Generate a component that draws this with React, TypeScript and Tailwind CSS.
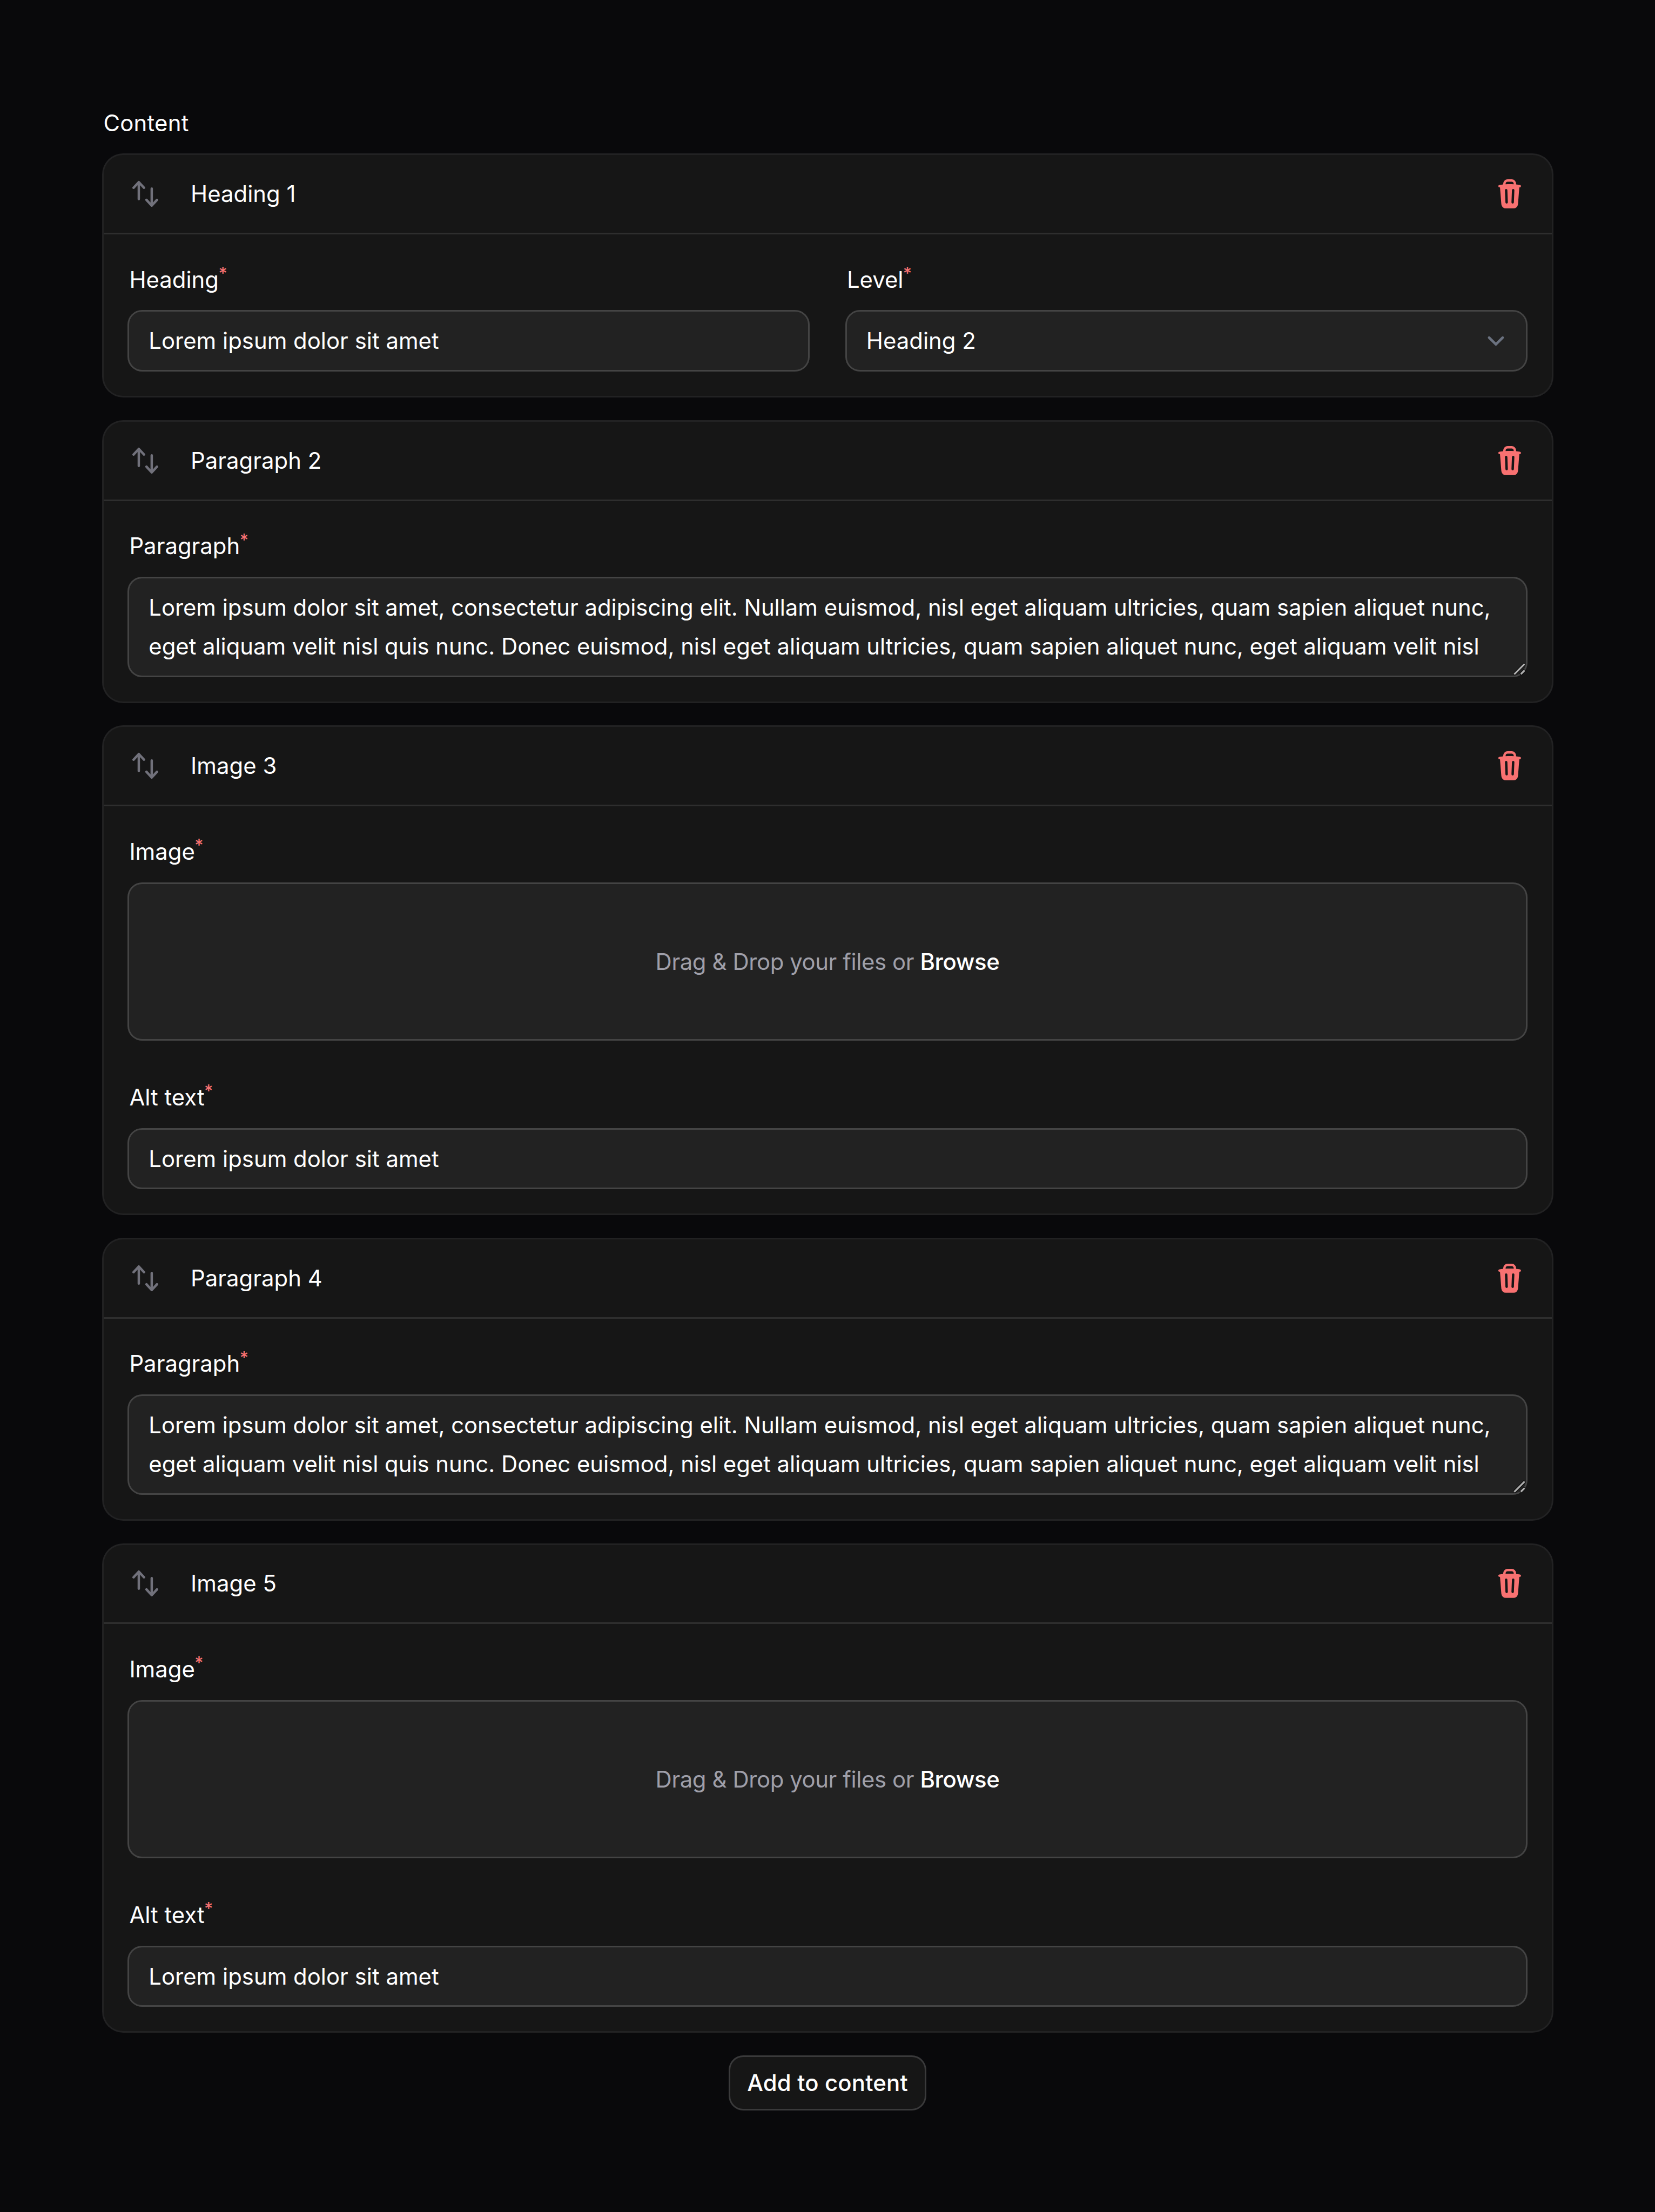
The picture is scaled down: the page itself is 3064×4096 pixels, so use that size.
import type { ReactNode } from "react";
import { HiMiniArrowsUpDown, HiMiniTrash } from "react-icons/hi2";

const LOREM =
  "Lorem ipsum dolor sit amet, consectetur adipiscing elit. Nullam euismod, nisl eget aliquam ultricies, quam sapien aliquet nunc, eget aliquam velit nisl quis nunc. Donec euismod, nisl eget aliquam ultricies, quam sapien aliquet nunc, eget aliquam velit nisl";

function Field({ label, children }: { label: string; children: ReactNode }) {
  return (
    <div className="grid min-w-0 gap-2">
      <div className="h-6 text-sm leading-6">
        {label}
        <sup className="-ml-[0.2px] font-medium text-[#f87171]">*</sup>
      </div>
      {children}
    </div>
  );
}

function TextInput({ value }: { value: string }) {
  return (
    <div className="h-9 rounded-lg bg-[#222222] px-3 text-sm leading-9 shadow-[0_0_0_1px_#444444]">
      {value}
    </div>
  );
}

function SelectInput({ value }: { value: string }) {
  return (
    <div className="flex h-9 items-center justify-between rounded-lg bg-[#222222] pl-3 pr-2 text-sm shadow-[0_0_0_1px_#444444]">
      <span>{value}</span>
      <svg className="size-[21px]" viewBox="0 0 20 20" fill="none">
        <path d="M6 8l4 4 4-4" stroke="#6b7280" strokeWidth="1.5" strokeLinecap="round" strokeLinejoin="round" />
      </svg>
    </div>
  );
}

function TextArea({ value }: { value: string }) {
  return (
    <div className="relative h-[60px] rounded-lg bg-[#222222] px-3 py-1.5 text-sm leading-6 shadow-[0_0_0_1px_#444444]">
      <div className="h-12 overflow-hidden tracking-[-0.016px]">{value}</div>
      <svg className="absolute bottom-0 right-0 size-2" viewBox="0 0 8 8" fill="none">
        <path d="M.6 7.4 7.4 .6M4.6 7.4 7.4 4.6" stroke="#0c0c0c" strokeWidth="1.9" />
        <path d="M.8 7.2 7.2 .8M4.9 7.1 7.2 4.8" stroke="#b0b0b0" strokeWidth="1.1" />
      </svg>
    </div>
  );
}

function DropZone() {
  return (
    <div className="flex h-24 items-center justify-center rounded-lg bg-[#222222] text-sm tracking-[-0.135px] text-zinc-400 shadow-[0_0_0_1px_#444444]">
      <span className="pt-[0.4px]">
        Drag &amp; Drop your files or <span className="font-medium text-white">Browse</span>
      </span>
    </div>
  );
}

function Block({ title, children }: { title: string; children: ReactNode }) {
  return (
    <section className="rounded-xl bg-[#161616] shadow-[0_0_0_1px_#222223]">
      <header className="flex h-12 items-center px-4">
        <HiMiniArrowsUpDown className="size-5 text-zinc-500" />
        <h2 className="ml-[18px] flex-1 text-sm leading-6">{title}</h2>
        <HiMiniTrash className="size-5 text-[#f87171]" />
      </header>
      <div className="h-px bg-[#2e2e2e]" />
      <div className="grid gap-6 p-4">{children}</div>
    </section>
  );
}

function ImageBlock({ title }: { title: string }) {
  return (
    <Block title={title}>
      <Field label="Image">
        <DropZone />
      </Field>
      <Field label="Alt text">
        <TextInput value="Lorem ipsum dolor sit amet" />
      </Field>
    </Block>
  );
}

function ParagraphBlock({ title }: { title: string }) {
  return (
    <Block title={title}>
      <Field label="Paragraph">
        <TextArea value={LOREM} />
      </Field>
    </Block>
  );
}

export default function App() {
  return (
    <div className="h-[4096px] w-[3064px] overflow-hidden bg-[#09090b]">
      <main className="w-[1024px] p-16 font-['Inter',sans-serif] text-white antialiased [zoom:2.9922]">
        <div className="text-sm leading-6 tracking-[0.07px]">Content</div>
        <div className="mt-2 grid gap-4">
          <Block title="Heading 1">
            <div className="grid grid-cols-2 gap-6">
              <Field label="Heading">
                <TextInput value="Lorem ipsum dolor sit amet" />
              </Field>
              <Field label="Level">
                <SelectInput value="Heading 2" />
              </Field>
            </div>
          </Block>
          <ParagraphBlock title="Paragraph 2" />
          <ImageBlock title="Image 3" />
          <ParagraphBlock title="Paragraph 4" />
          <ImageBlock title="Image 5" />
        </div>
        <div className="mt-4 flex justify-center">
          <button className="h-8 w-[120px] whitespace-nowrap rounded-lg bg-[#161616] text-center text-sm font-medium tracking-[0.06px] shadow-[0_0_0_1px_#3a3a3b]">
            Add to content
          </button>
        </div>
      </main>
    </div>
  );
}
